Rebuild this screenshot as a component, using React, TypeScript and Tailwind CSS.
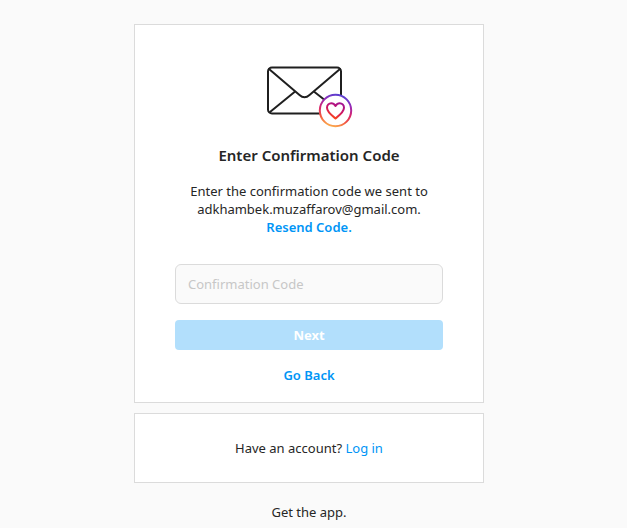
import { useState } from "react";

function MailHeartIcon() {
  return (
    <svg
      width="88"
      height="66"
      viewBox="0 0 88 66"
      fill="none"
      aria-hidden="true"
      className="block"
    >
      <defs>
        <linearGradient id="badge" x1="74" y1="30" x2="65" y2="62" gradientUnits="userSpaceOnUse">
          <stop offset="0" stopColor="#5b3fd0" />
          <stop offset="0.25" stopColor="#9a2bb4" />
          <stop offset="0.5" stopColor="#d6246f" />
          <stop offset="0.75" stopColor="#f2563f" />
          <stop offset="1" stopColor="#fdb64e" />
        </linearGradient>
        <linearGradient id="heart" x1="74" y1="38" x2="68" y2="54" gradientUnits="userSpaceOnUse">
          <stop offset="0" stopColor="#a3128f" />
          <stop offset="0.5" stopColor="#d01762" />
          <stop offset="1" stopColor="#ff4a12" />
        </linearGradient>
      </defs>
      <g stroke="#1f1f1f" strokeWidth="2" strokeLinecap="round" strokeLinejoin="round">
        <rect x="3" y="2.500" width="73" height="46" rx="4" />
        <path d="M4 4L34.500 30Q39.500 34.500 44.500 30L75 4" />
        <path d="M5 47L29.500 27" />
        <path d="M49.500 27L75 47" />
      </g>
      <circle cx="70.500" cy="45.500" r="15.700" fill="#fff" stroke="url(#badge)" strokeWidth="2" />
      <path
        d="M70.500 53.500C69.500 52.500 62 47.500 62 42.800C62 40 64 38.200 66.300 38.200C68.300 38.200 69.500 39.300 70.500 41C71.500 39.300 72.700 38.200 74.700 38.200C77 38.200 79 40 79 42.800C79 47.500 71.500 52.500 70.500 53.500Z"
        stroke="url(#heart)"
        strokeWidth="2"
        strokeLinejoin="round"
      />
    </svg>
  );
}

export default function App() {
  const [code, setCode] = useState("");

  return (
    <main className="flex min-h-screen flex-col items-center bg-[#fafafa] pt-6 pr-[9px] font-['Noto_Sans','Open_Sans',sans-serif] text-[13px] leading-[18px] text-[#262626]">
      <div className="flex w-full max-w-[350px] flex-col gap-2.5">
        <section className="flex flex-col items-center border border-[#dbdbdb] bg-white px-10 pt-10 pb-[18px] text-center">
          <MailHeartIcon />
          <h1 className="mt-[15px] text-[15px] leading-[18px] font-semibold">Enter Confirmation Code</h1>
          <p className="mt-[18px]">
            Enter the confirmation code we sent to
            <br />
            adkhambek.muzaffarov@gmail.com.
            <br />
            <button type="button" className="font-semibold text-[#0095f6]">
              Resend Code.
            </button>
          </p>
          <form className="mt-7 flex w-full flex-col gap-4" onSubmit={(e) => e.preventDefault()}>
            <input
              aria-label="Confirmation Code"
              placeholder="Confirmation Code"
              value={code}
              onChange={(e) => setCode(e.target.value)}
              className="h-10 w-full rounded-md border border-[#dbdbdb] bg-[#fafafa] px-3 outline-none placeholder:text-[#c7c7c7]"
            />
            <button
              type="submit"
              disabled={code === ""}
              className="h-[30px] w-full rounded bg-[#0095f6] font-bold text-white disabled:bg-[#b2dffc]"
            >
              Next
            </button>
          </form>
          <button type="button" className="mt-4 font-semibold text-[#0095f6]">
            Go Back
          </button>
        </section>
        <section className="border border-[#dbdbdb] bg-white py-[25px] text-center">
          <p>
            Have an account?{" "}
            <a href="#login" className="text-[#0095f6]">
              Log in
            </a>
          </p>
        </section>
      </div>
      <p className="mt-5">Get the app.</p>
    </main>
  );
}
